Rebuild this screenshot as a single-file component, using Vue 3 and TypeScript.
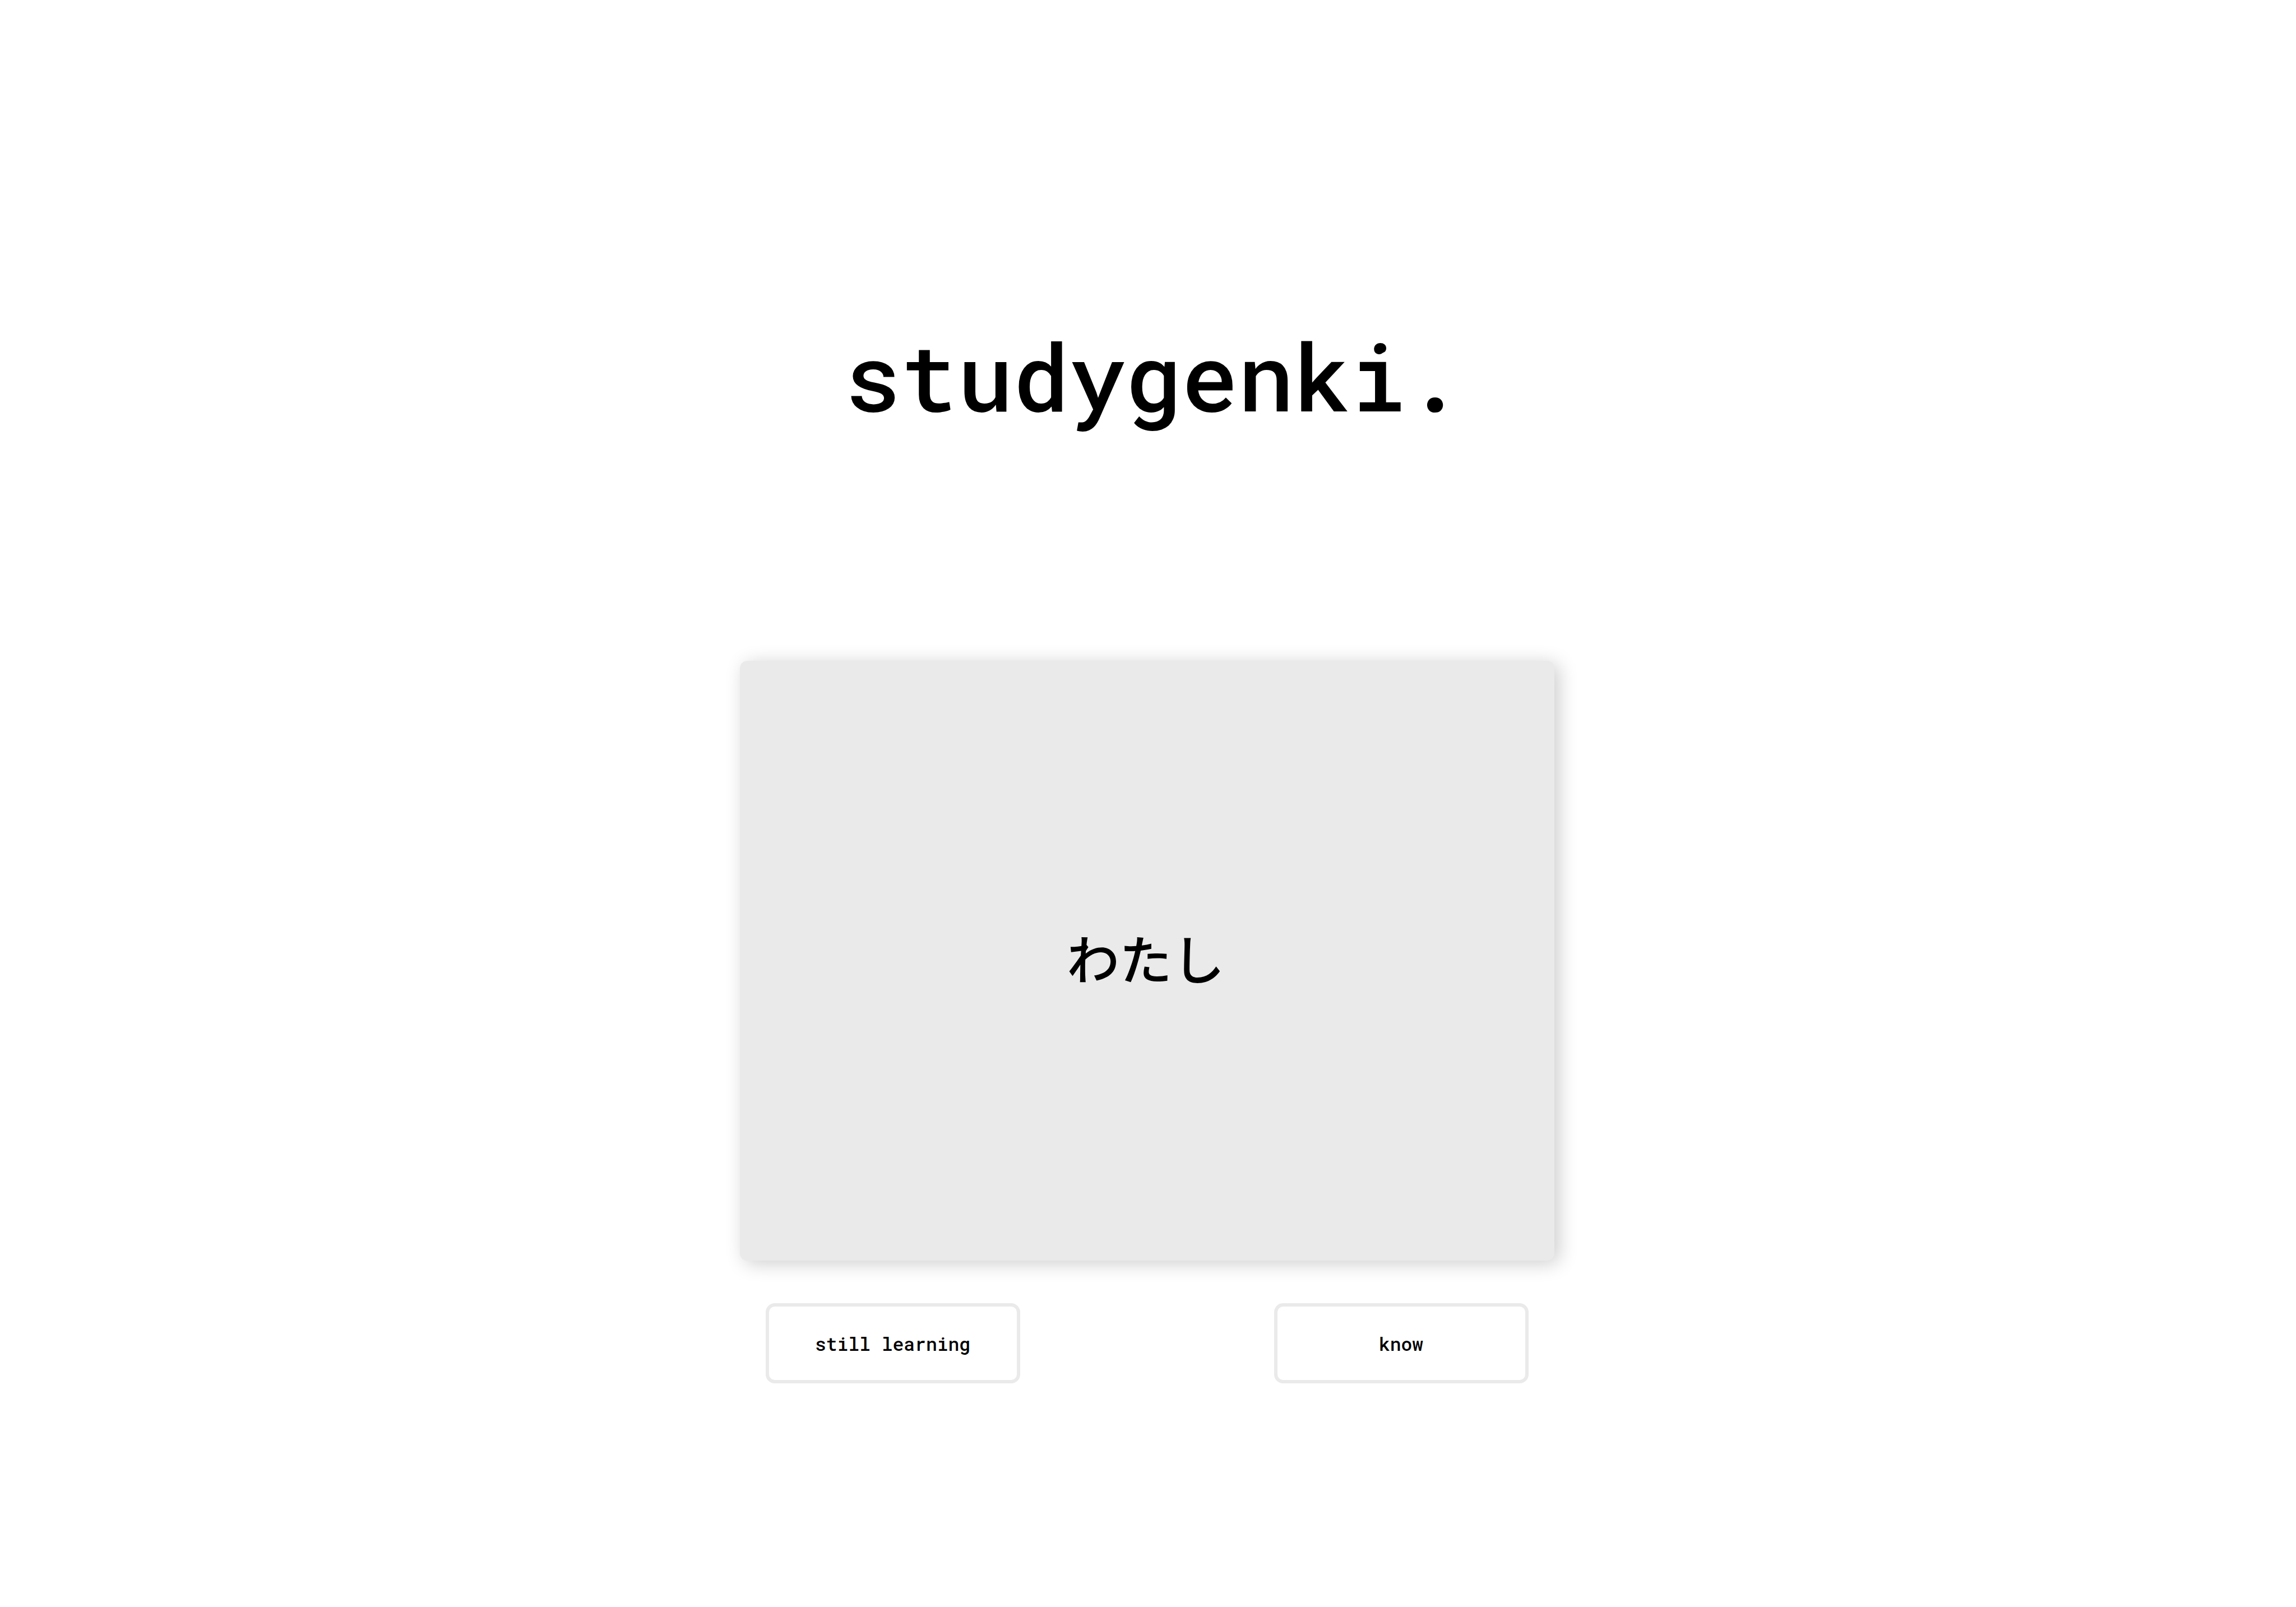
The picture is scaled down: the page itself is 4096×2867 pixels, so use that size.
<script setup lang="ts">
import { ref } from 'vue'

interface Card {
  front: string
  back: string
}

const card: Card = { front: 'わたし', back: 'I' }
const flipped = ref(false)
const known = ref<boolean | null>(null)

function flip(): void {
  flipped.value = !flipped.value
}

function answer(value: boolean): void {
  known.value = value
  flipped.value = false
}
</script>

<template>
  <main class="page">
    <h1 class="title">studygenki.</h1>
    <section class="deck">
      <button type="button" class="card" lang="ja" @click="flip">
        {{ flipped ? card.back : card.front }}
      </button>
      <div class="actions">
        <button type="button" class="action" @click="answer(false)">still learning</button>
        <button type="button" class="action" @click="answer(true)">know</button>
      </div>
    </section>
  </main>
</template>

<style>
body {
  margin: 0;
  background: #fff;
}
</style>

<style scoped>
.page {
  display: flex;
  flex-direction: column;
  align-items: center;
  gap: 399px;
  padding: 559px 44px 40px 40px;
  color: #000;
  font-family: 'Roboto Mono', 'DejaVu Sans Mono', 'Liberation Mono', monospace;
}

.title {
  margin: 0;
  padding-left: 24px;
  font-size: 167px;
  line-height: 221px;
  font-weight: 500;
}

.deck {
  display: flex;
  flex-direction: column;
  gap: 76px;
  width: 100%;
  max-width: 1453px;
}

.card {
  display: flex;
  align-items: center;
  justify-content: center;
  width: 100%;
  min-height: 1070px;
  padding: 40px 44px 54px 40px;
  border: 0;
  border-radius: 13px;
  background: #eaeaea;
  box-shadow: 8px 5px 34px rgba(0, 0, 0, 0.2);
  color: #000;
  font-family: 'Noto Sans CJK JP', sans-serif;
  font-size: 94px;
  font-weight: 500;
  cursor: pointer;
}

.actions {
  display: flex;
  justify-content: space-between;
  padding: 0 46px;
}

.action {
  width: 454px;
  height: 143px;
  padding: 0;
  border: 6px solid #eaeaea;
  border-radius: 16px;
  background: #fff;
  color: #000;
  font-family: inherit;
  font-size: 33px;
  font-weight: 500;
  cursor: pointer;
}
</style>
